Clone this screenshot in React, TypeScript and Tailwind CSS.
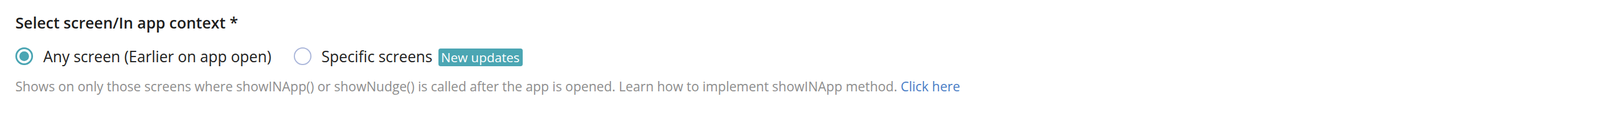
import React from "react"

function Radio({ checked }: { checked?: boolean }) {
  if (checked) {
    return (
      <span className="flex h-[31px] w-[31px] shrink-0 items-center justify-center rounded-full border-[3px] border-[#4aa5b3]">
        <span className="h-[17px] w-[17px] rounded-full bg-[#4aa5b3]" />
      </span>
    )
  }
  return <span className="h-[31px] w-[31px] shrink-0 rounded-full border-[2.5px] border-[#aab6da]" />
}

export default function App() {
  return (
    <div className="h-[218px] w-full bg-white pl-[27px] pt-[22px] font-['Open_Sans',sans-serif]">
      <h2 className="text-[27px] font-semibold leading-[36px] text-[#1e1e1e]">Select screen/In app context *</h2>

      <div className="mt-[23px] flex items-center">
        <label className="flex items-center gap-[18px]">
          <Radio checked />
          <span className="text-[26.5px] leading-[34px] text-[#222]">Any screen (Earlier on app open)</span>
        </label>
        <label className="ml-[39px] flex items-center gap-[18px]">
          <Radio />
          <span className="text-[26.5px] leading-[34px] text-[#222]">Specific screens</span>
        </label>
        <span className="ml-[10px] mt-[4px] rounded-[4px] bg-[#4ba6b3] px-[5px] text-[22.5px] leading-[31px] text-white">
          New updates
        </span>
      </div>

      <p className="mt-[20px] text-[23px] leading-[30px] text-[#8e8e8e]">
        Shows on only those screens where showINApp() or showNudge() is called after the app is opened. Learn how to
        implement showINApp method. <a className="text-[#4a7dc6]">Click here</a>
      </p>
    </div>
  )
}
